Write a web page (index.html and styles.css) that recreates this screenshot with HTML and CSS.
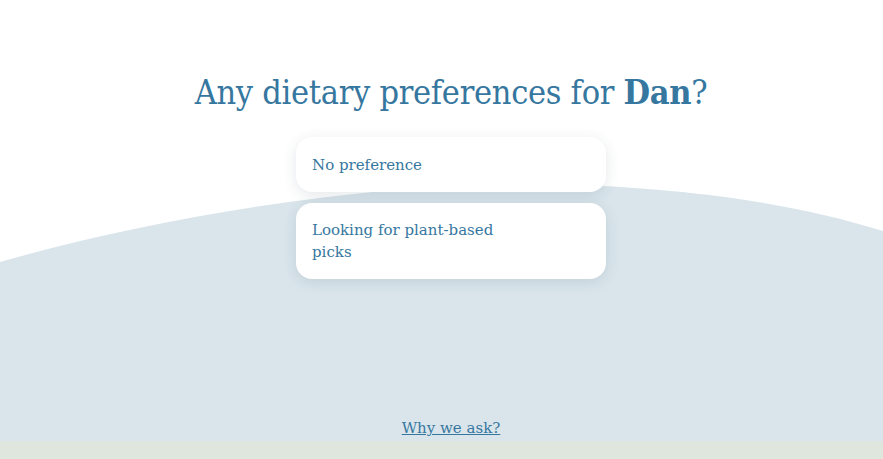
FILE: index.html
```html
<!DOCTYPE html>
<html lang="en">
<head>
<meta charset="utf-8">
<title>Dietary preferences</title>
<link rel="stylesheet" href="styles.css">
</head>
<body>
<main class="page">
  <svg class="wave" viewBox="0 0 883 441" preserveAspectRatio="none" aria-hidden="true">
    <path d="M0 262 C200 205 420 180 560 184 C700 189 800 205 883 231 L883 441 L0 441 Z" fill="#d9e5eb"/>
  </svg>
  <h1 class="title">Any dietary preferences for <strong>Dan</strong>?</h1>
  <div class="options">
    <button class="option" type="button"><span class="option-label">No preference</span></button>
    <button class="option" type="button"><span class="option-label">Looking for plant-based picks</span></button>
  </div>
  <div class="spacer"></div>
  <a class="why" href="#">Why we ask?</a>
</main>
<footer class="strip"></footer>
</body>
</html>
```
FILE: styles.css
```css
* { box-sizing: border-box; }
html, body { margin: 0; padding: 0; background: #ffffff; }
body {
  font-family: "DejaVu Serif", "Liberation Serif", serif;
  color: #3677a0;
  width: 883px;
  height: 459px;
  overflow: hidden;
}
.page {
  position: relative;
  height: 441px;
  display: flex;
  flex-direction: column;
  align-items: center;
  padding-top: 70px;
  padding-left: 19px;
}
.wave {
  position: absolute;
  left: 0;
  top: 0;
  width: 883px;
  height: 441px;
  z-index: 0;
}
.title {
  position: relative;
  z-index: 1;
  margin: 0;
  font-size: 34px;
  font-stretch: semi-condensed;
  line-height: 44px;
  font-weight: 400;
  letter-spacing: -0.3px;
  color: #3677a0;
}
.title strong { font-weight: 700; }
.options {
  position: relative;
  z-index: 1;
  margin-top: 23px;
  display: flex;
  flex-direction: column;
  gap: 11px;
  width: 310px;
}
.option {
  display: block;
  width: 100%;
  text-align: left;
  background: #ffffff;
  border: none;
  border-radius: 16px;
  padding: 16px 16px;
  min-height: 55px;
  box-shadow: 0 3px 14px rgba(40, 60, 80, 0.12);
  font-family: inherit;
  font-size: 15px;
  line-height: 22px;
  color: #3677a0;
  cursor: pointer;
}
.option-label {
  display: block;
  max-width: 200px;
}
.spacer { flex: 1; }
.why {
  position: relative;
  z-index: 1;
  font-size: 15px;
  line-height: 20px;
  color: #3677a0;
  text-decoration: underline;
  margin-bottom: 3px;
}
.strip {
  position: relative;
  height: 18px;
  background: #dfe6de;
}
```
